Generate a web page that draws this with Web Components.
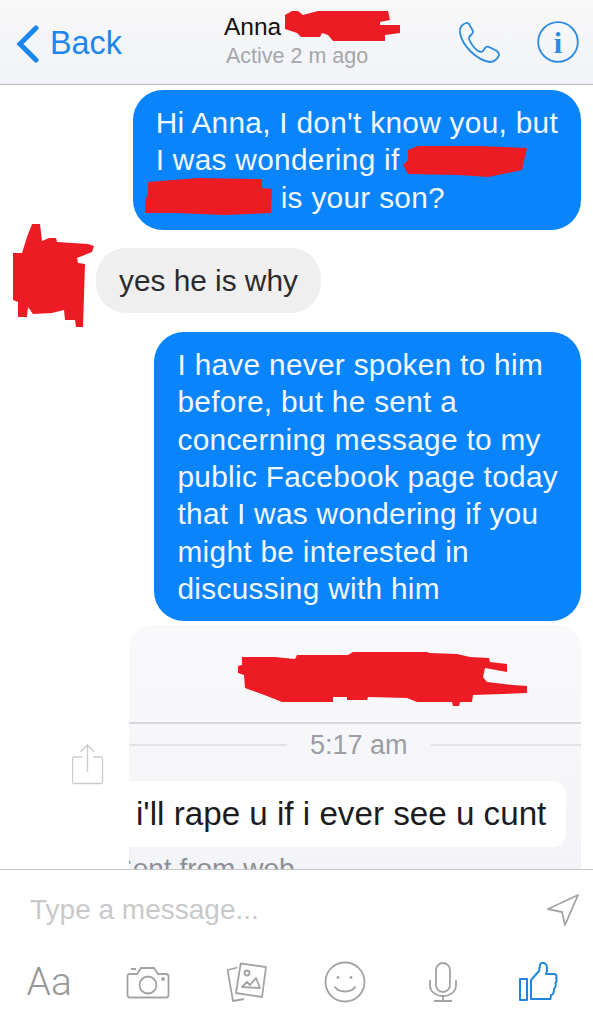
<!DOCTYPE html>
<html>
<head>
<meta charset="utf-8">
<title>Messenger</title>
<style>
  html, body { margin: 0; background: #fff; }
  body { font-family: "Liberation Sans", Arial, sans-serif; }
</style>
</head>
<body>
<chat-screen>
  <chat-header slot="header"></chat-header>
  <msg-bubble mine>Hi Anna, I don't know you, but<br>I was wondering if<br><span style="display:inline-block;width:125px"></span>is your son?</msg-bubble>
  <msg-bubble style="margin-top:18px;margin-left:96px">yes he is why</msg-bubble>
  <msg-bubble mine style="margin-top:19px">I have never spoken to him<br>before, but he sent a<br>concerning message to my<br>public Facebook page today<br>that I was wondering if you<br>might be interested in<br>discussing with him</msg-bubble>
  <shared-card style="margin-top:4px"></shared-card>
  <chat-composer slot="footer"></chat-composer>
</chat-screen>

<script>
class ChatScreen extends HTMLElement {
  connectedCallback() {
    this.attachShadow({ mode: 'open' });
    // hand-drawn redactions, in page coordinates
    const shapes = [
      '285,15 292,11 298,11 303,15 318,11 388,11 390,20 380,22 380,25 400,25 400,33 385,35 385,41 333,41 328,35 322,33 320,37 301,37 297,33 285,29',
      '408,150 418,146 478,146 527,148 522,170 488,177 458,175 408,174 403,165 408,160',
      '148,182 198,178 262,179 262,188 272,189 271,213 225,215 175,213 145,213 145,202 148,192',
      '32,224 40,224 42,241 49,238 56,238 57,242 88,244 94,246 92,252 77,258 78,263 85,264 83,327 76,327 75,320 65,320 64,310 52,313 33,314 28,307 27,317 18,317 18,302 13,300 13,253 22,253 27,237',
      '242,657 275,657 295,659 297,655 348,655 353,652 427,652 430,653 457,654 470,657 489,658 490,662 507,664 507,672 485,668 483,677 487,682 513,685 527,686 527,693 473,695 472,702 460,702 459,706 453,706 452,702 417,702 407,698 368,697 367,700 347,700 347,697 333,697 333,702 282,702 267,696 245,688 244,675 238,673 238,666 242,665'
    ];
    this.shadowRoot.innerHTML = `
      <style>
        :host { display: flex; flex-direction: column; position: relative; width: 593px; height: 1024px; overflow: hidden; background: #fff; }
        .scroll { flex: 1; min-height: 0; overflow: hidden; display: flex; flex-direction: column; align-items: flex-start; padding: 5px 12px 0 0; }
        svg { position: absolute; left: 0; top: 0; pointer-events: none; }
      </style>
      <slot name="header"></slot>
      <div class="scroll"><slot></slot></div>
      <slot name="footer"></slot>
      <svg width="593" height="1024" fill="#ed1c24">
        ${shapes.map(p => `<polygon points="${p}"/>`).join('')}
      </svg>
    `;
  }
}

class ChatHeader extends HTMLElement {
  connectedCallback() {
    this.attachShadow({ mode: 'open' });
    this.shadowRoot.innerHTML = `
      <style>
        :host { display: flex; align-items: center; box-sizing: border-box; height: 85px; flex: none; background: linear-gradient(#f8f8f8, #f1f3f8); border-bottom: 1px solid #b9b9bc; color: #1b87ee; }
        .back { display: flex; align-items: center; width: 224px; padding: 3px 0 0 16px; box-sizing: border-box; font-size: 32.3px; }
        .back svg { margin-right: 11px; }
        .who { flex: 1; display: flex; flex-direction: column; gap: 3px; margin-top: -1px; }
        .name { font-size: 24.5px; line-height: 26px; color: #111; }
        .status { font-size: 21.5px; line-height: 26px; color: #a3a6aa; margin-left: 2px; }
        .actions { display: flex; gap: 37px; margin-right: 14px; }
        svg { display: block; }
      </style>
      <div class="back">
        <svg width="23" height="38" viewBox="0 0 23 38" fill="none" stroke="#1b87ee" stroke-width="5" stroke-linecap="round" stroke-linejoin="miter"><path d="M20 3 L4 19 L20 35"/></svg>
        <span>Back</span>
      </div>
      <div class="who">
        <span class="name">Anna</span>
        <span class="status">Active 2 m ago</span>
      </div>
      <div class="actions">
        <svg width="42" height="42" viewBox="0 0 42 42" fill="none" stroke="#2a8be0" stroke-width="1.8"><path d="M8 2 C4 3 1 7 2 12 C4 24 18 39 32 41 C36 41 40 38 41 34 C41 32 40 31 39 30 L31 26 C29 25 28 26 27 27 L25 30 C24 31 22 31 20 30 C16 27 13 23 11 18 C10.5 17 11 16 12 15 L14 13 C15 12 15 11 15 10 L11 3 C10 2 9 1.5 8 2 Z"/></svg>
        <svg width="42" height="42" viewBox="0 0 42 42" fill="none"><circle cx="21" cy="21" r="19.8" stroke="#2a8be0" stroke-width="1.8"/><text x="21" y="32" text-anchor="middle" font-family="Liberation Serif, serif" font-weight="700" font-size="30" fill="#2a8be0">i</text></svg>
      </div>
    `;
  }
}

class MsgBubble extends HTMLElement {
  connectedCallback() {
    this.attachShadow({ mode: 'open' });
    this.shadowRoot.innerHTML = `
      <style>
        :host { display: block; box-sizing: border-box; flex: none; padding: 14px 23px; border-radius: 30px; font-size: 29.8px; line-height: 37.3px; white-space: nowrap; background: #f0eff0; color: #2b2b2d; }
        :host([mine]) { align-self: flex-end; background: #0a84fb; color: #f2f8ff; letter-spacing: .3px; }
      </style>
      <slot></slot>
    `;
  }
}

class SharedCard extends HTMLElement {
  connectedCallback() {
    this.attachShadow({ mode: 'open' });
    this.shadowRoot.innerHTML = `
      <style>
        :host { display: block; position: relative; flex: none; align-self: flex-end; width: 452px; height: 290px; }
        .card { height: 100%; overflow: hidden; border-radius: 24px 24px 0 0; background: linear-gradient(#f9f9fb, #f2f3f6); }
        .title { height: 97px; border-bottom: 2px solid #d6d7da; }
        .time { display: flex; align-items: center; gap: 23px; height: 42px; font-size: 27px; line-height: 42px; color: #9a9da3; white-space: nowrap; }
        .time i { flex: 1; height: 2px; background: #e3e4e6; }
        .time i:first-child { flex: 0 0 158px; }
        .text { margin: 15px 15px 0 -20px; padding: 0 20px 0 27px; height: 66px; border-radius: 14px; background: #fff; font-size: 33.2px; line-height: 66px; color: #1c1c1e; white-space: nowrap; }
        .sent { margin: 7px 0 0 -15px; font-size: 28px; line-height: 30px; color: #8d9095; white-space: nowrap; }
        .share { position: absolute; left: -57px; top: 119px; }
      </style>
      <div class="card">
        <div class="title"></div>
        <div class="time"><i></i><span>5:17 am</span><i></i></div>
        <div class="text">i'll rape u if i ever see u cunt</div>
        <div class="sent">Sent from web</div>
      </div>
      <svg class="share" width="32" height="41" viewBox="0 0 32 41" fill="none" stroke="#c9cbce" stroke-width="1.3"><path d="M10 13 H2 a1.5 1.5 0 0 0 -1.5 1.5 V38 a1.5 1.5 0 0 0 1.5 1.5 H29 a1.5 1.5 0 0 0 1.5 -1.5 V14.5 A1.5 1.5 0 0 0 29 13 H21 M15.5 28 V1.5 M8.5 8 L15.5 1 L22.5 8"/></svg>
    `;
  }
}

class ChatComposer extends HTMLElement {
  connectedCallback() {
    this.attachShadow({ mode: 'open' });
    this.shadowRoot.innerHTML = `
      <style>
        :host { display: block; box-sizing: border-box; height: 155px; flex: none; background: #fff; border-top: 1px solid #c6c6c8; }
        .input { display: flex; align-items: center; justify-content: space-between; height: 80px; padding: 0 14px 0 30px; font-size: 28px; color: #c9c9cb; }
        .tools { display: grid; grid-template-columns: repeat(6, 98.5px); height: 44px; margin-top: 10px; align-items: center; justify-items: center; }
        .aa { font-family: Roboto, "Liberation Sans", sans-serif; font-weight: 300; font-size: 39px; line-height: 44px; color: #98989a; }
        svg { display: block; }
      </style>
      <div class="input">
        <span>Type a message...</span>
        <svg width="32" height="32" viewBox="0 0 32 32" fill="none" stroke="#a3a3a5" stroke-width="1.8" stroke-linejoin="round"><path d="M31 1 L1 15 L15 18 L18 31 Z"/></svg>
      </div>
      <div class="tools">
        <span class="aa">Aa</span>
        <svg width="44" height="34" viewBox="0 0 44 34" fill="none" stroke="#a3a3a5" stroke-width="1.8"><path d="M2.5 9 H11 L15 3 H28 L32 9 H40 a2.5 2.5 0 0 1 2.5 2.5 V30 a2.5 2.5 0 0 1 -2.5 2.5 H4 a2.5 2.5 0 0 1 -2.5 -2.5 V11 a2.5 2.5 0 0 1 1 -2 M5 4 H10"/><circle cx="22" cy="20" r="8.5"/><circle cx="37" cy="14" r="1" fill="#a3a3a5"/></svg>
        <svg style="margin-left:2px" width="41" height="40" viewBox="228 963 41 40" fill="none" stroke="#a3a3a5" stroke-width="1.8" stroke-linejoin="round"><path d="M241.7 964.5 L267 968 L263 998 L237 994 Z"/><path d="M238.5 968.5 L228.5 971 L234 1002 L245 1000"/><circle cx="248" cy="974" r="2.5"/><path d="M243 988 L248 983 L251 986 L257 979 L261 989 Z"/></svg>
        <svg width="42" height="42" viewBox="0 0 42 42" fill="none" stroke="#a3a3a5" stroke-width="1.8"><circle cx="21" cy="21" r="19.5"/><circle cx="14" cy="16.5" r="1.4" fill="#a3a3a5" stroke="none"/><circle cx="27" cy="16.5" r="1.4" fill="#a3a3a5" stroke="none"/><path d="M11 26 C15 32 27 32 31 26" stroke-linecap="round"/></svg>
        <svg width="28" height="40" viewBox="0 0 28 40" fill="none" stroke="#a3a3a5" stroke-width="1.8"><rect x="7" y="1" width="14" height="29" rx="7"/><path d="M1 18 V23 C1 30 7 34 14 34 C21 34 27 30 27 23 V18 M14 34 V39 M5 39 H23"/></svg>
        <svg style="margin-right:6px" width="39" height="40" viewBox="0 0 39 40" fill="none" stroke="#1f85e0" stroke-width="2" stroke-linejoin="round"><rect x="1" y="17" width="7" height="21"/><path d="M12 37 V18 L20 9 L21 3 C21 1 24 0 26 1.5 C28.5 3.5 28.5 8 27 12 H35 C37.5 12 38 14.5 37 16 C38 18 37.5 20 36.5 21 C37 23 36.5 26 35 27 C35 30 34 33 32 33 L31.5 37 H14 Z"/></svg>
      </div>
    `;
  }
}

customElements.define('chat-screen', ChatScreen);
customElements.define('chat-header', ChatHeader);
customElements.define('msg-bubble', MsgBubble);
customElements.define('shared-card', SharedCard);
customElements.define('chat-composer', ChatComposer);
</script>
</body>
</html>
